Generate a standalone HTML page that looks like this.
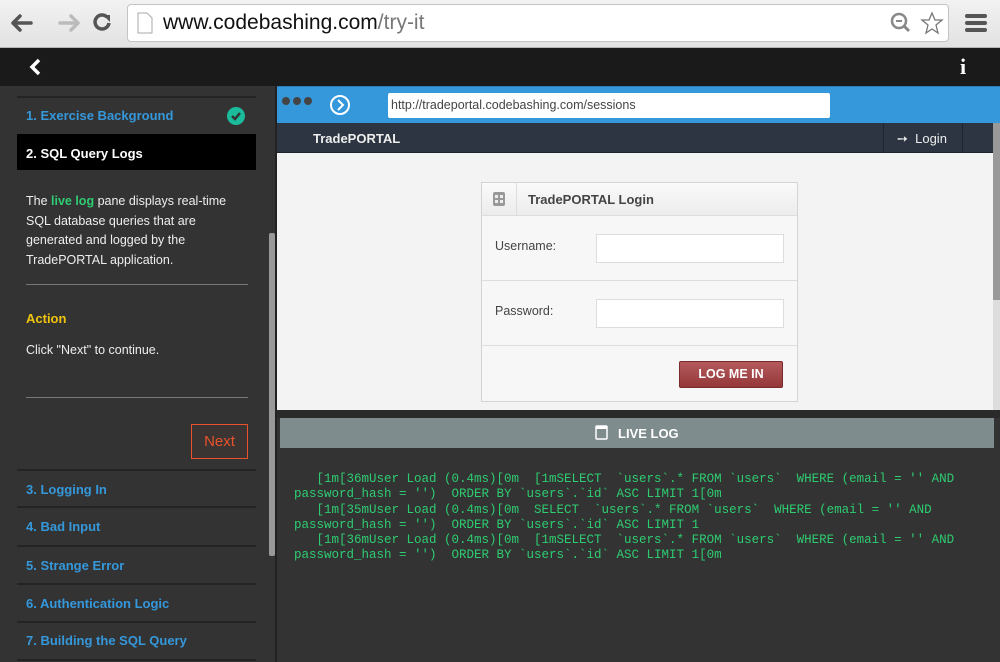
<!DOCTYPE html>
<html><head><meta charset="utf-8"><style>
*{margin:0;padding:0;box-sizing:border-box}
body{width:1000px;height:662px;overflow:hidden;font-family:"Liberation Sans",Arial,sans-serif;background:#333;position:relative}
.a{position:absolute}
.chrome{left:0;top:0;width:1000px;height:48px;background:linear-gradient(#f2f2f2,#e2e2e2);border-bottom:1px solid #b5b5b5}
.url{left:127px;top:4px;width:822px;height:38px;background:#fff;border:1px solid #c4c4c4;border-radius:4px}
.side{left:0;top:86px;width:276px;height:576px;background:#333}
.sep{left:17px;width:239px;height:2px;background:#242424}
.item{left:26px;font-size:13px;font-weight:bold;color:#3498db}
.txt{color:#eee;font-size:12.5px;line-height:19.5px}
pre{font-family:"Liberation Mono",monospace;font-size:12.5px;line-height:15.3px;color:#2ecc71}
</style></head><body>
<div class="a chrome"></div>
<svg class="a" style="left:8px;top:10px" width="110" height="26" viewBox="0 0 110 26">
<path d="M5 13h18M5 13l7-7M5 13l7 7" stroke="#555" stroke-width="3.5" fill="none" stroke-linecap="round"/>
<path d="M52 13h18M70 13l-7-7M70 13l-7 7" stroke="#bbb" stroke-width="3.5" fill="none" stroke-linecap="round"/>
<path d="M99 7a7 7 0 1 0 2 6" stroke="#555" stroke-width="3.5" fill="none"/><path d="M95 5l7 0 0 7z" fill="#555"/>
</svg>
<div class="a url"></div>
<svg class="a" style="left:137px;top:12px" width="16" height="22"><path d="M1 1h9l5 5v15H1z" fill="#fff" stroke="#aaa"/></svg>
<div class="a" style="left:163px;top:11px;font-size:21px;color:#111">www.codebashing.com<span style="color:#777">/try-it</span></div>
<svg class="a" style="left:888px;top:10px" width="60" height="28"><circle cx="11" cy="11" r="7" stroke="#888" stroke-width="2.5" fill="none"/><path d="M16 16l5 5" stroke="#888" stroke-width="3"/><path d="M8 11h6" stroke="#888" stroke-width="2"/><path d="M44 3l3 7h7l-6 5 2 8-6-4-6 4 2-8-6-5h7z" fill="#fff" stroke="#777" stroke-width="1.3"/></svg>
<div class="a" style="left:965px;top:14px;width:22px;height:4px;background:#555;border-radius:2px;box-shadow:0 7px 0 #555,0 14px 0 #555"></div>
<div class="a" style="left:0;top:48px;width:1000px;height:38px;background:#1a1a1a"></div>
<svg class="a" style="left:28px;top:58px" width="14" height="18"><path d="M11 2L4 9l7 7" stroke="#fff" stroke-width="3.5" fill="none"/></svg>
<div class="a" style="left:960px;top:54px;font-family:'Liberation Serif',serif;font-weight:bold;font-size:22px;color:#fff">i</div>

<div class="a side"></div>
<div class="a sep" style="top:96px"></div>
<div class="a item" style="top:108px">1. Exercise Background</div>
<div class="a" style="left:227px;top:107px;width:18px;height:18px;border-radius:50%;background:#1abc9c"></div>
<svg class="a" style="left:227px;top:107px" width="18" height="18"><path d="M5 9l3 3 5-6" stroke="#333" stroke-width="2.5" fill="none"/></svg>
<div class="a" style="left:17px;top:134px;width:239px;height:36px;background:#000"></div>
<div class="a item" style="top:146px;color:#fff">2. SQL Query Logs</div>
<div class="a txt" style="left:26px;top:192px;width:205px">The <b style="color:#2ecc71">live log</b> pane displays real-time SQL database queries that are generated and logged by the TradePORTAL application.</div>
<div class="a" style="left:26px;top:284px;width:222px;height:1px;background:#777"></div>
<div class="a" style="left:26px;top:311px;font-size:13px;font-weight:bold;color:#f1c40f">Action</div>
<div class="a txt" style="left:26px;top:341px">Click "Next" to continue.</div>
<div class="a" style="left:26px;top:397px;width:222px;height:1px;background:#777"></div>
<div class="a" style="left:191px;top:424px;width:57px;height:35px;border:1px solid #e9522b;background:#3a3533;color:#e9522b;font-size:15px;text-align:center;line-height:33px">Next</div>
<div class="a sep" style="top:469px"></div>
<div class="a item" style="top:482px">3. Logging In</div>
<div class="a sep" style="top:506px"></div>
<div class="a item" style="top:519px">4. Bad Input</div>
<div class="a sep" style="top:545px"></div>
<div class="a item" style="top:558px">5. Strange Error</div>
<div class="a sep" style="top:583px"></div>
<div class="a item" style="top:596px">6. Authentication Logic</div>
<div class="a sep" style="top:621px"></div>
<div class="a item" style="top:633px">7. Building the SQL Query</div>
<div class="a sep" style="top:659px"></div>
<div class="a" style="left:269px;top:233px;width:6px;height:323px;background:#999;border-radius:2px"></div>
<div class="a" style="left:275px;top:86px;width:2px;height:576px;background:#222"></div>

<div class="a" style="left:277px;top:86px;width:723px;height:37px;background:#3498db;border-top:1px solid #2a7fb8"></div>
<div class="a" style="left:282px;top:97px;width:8px;height:8px;border-radius:50%;background:#444;box-shadow:11px 0 0 #444,22px 0 0 #444"></div>
<svg class="a" style="left:329px;top:94px" width="22" height="22"><circle cx="11" cy="11" r="9" stroke="#fff" stroke-width="2" fill="none"/><path d="M9 6l5 5-5 5" stroke="#fff" stroke-width="2" fill="none"/></svg>
<div class="a" style="left:388px;top:93px;width:442px;height:25px;background:#fff;border-radius:2px;font-size:12.5px;color:#444;padding:5px 3px">http://tradeportal.codebashing.com/sessions</div>
<div class="a" style="left:277px;top:123px;width:716px;height:30px;background:#2c3541;border-bottom:1px solid #1e252e"></div>
<div class="a" style="left:313px;top:131px;font-size:13px;font-weight:bold;color:#eee">TradePORTAL</div>
<div class="a" style="left:883px;top:123px;width:80px;height:30px;border-left:1px solid #1e252e;border-right:1px solid #1e252e"></div>
<div class="a" style="left:897px;top:131px;font-size:13px;color:#eee">&#10137;&nbsp; Login</div>
<div class="a" style="left:277px;top:153px;width:716px;height:257px;background:#f3f3f3"></div>
<div class="a" style="left:993px;top:123px;width:7px;height:287px;background:#ddd"></div>
<div class="a" style="left:993px;top:123px;width:7px;height:177px;background:#999"></div>

<div class="a" style="left:481px;top:182px;width:317px;height:220px;background:#f7f7f7;border:1px solid #d4d4d4"></div>
<div class="a" style="left:482px;top:183px;width:315px;height:33px;background:linear-gradient(#fafafa,#ececec);border-bottom:1px solid #ddd"></div>
<div class="a" style="left:516px;top:183px;width:1px;height:33px;background:#ddd"></div>
<svg class="a" style="left:492px;top:191px" width="14" height="16"><rect x="1" y="1" width="12" height="14" rx="2" fill="#999"/><rect x="3" y="4" width="3" height="3" fill="#eee"/><rect x="8" y="4" width="3" height="3" fill="#eee"/><rect x="3" y="9" width="3" height="3" fill="#eee"/><rect x="8" y="9" width="3" height="3" fill="#eee"/></svg>
<div class="a" style="left:528px;top:192px;font-size:13px;font-weight:bold;color:#444">TradePORTAL Login</div>
<div class="a" style="left:495px;top:239px;font-size:12.5px;color:#444">Username:</div>
<div class="a" style="left:596px;top:234px;width:188px;height:29px;background:#fff;border:1px solid #ddd"></div>
<div class="a" style="left:482px;top:280px;width:315px;height:1px;background:#ddd"></div>
<div class="a" style="left:495px;top:304px;font-size:12.5px;color:#444">Password:</div>
<div class="a" style="left:596px;top:299px;width:188px;height:29px;background:#fff;border:1px solid #ddd"></div>
<div class="a" style="left:482px;top:345px;width:315px;height:1px;background:#ddd"></div>
<div class="a" style="left:679px;top:361px;width:104px;height:27px;background:linear-gradient(#b55a5c,#94383a);border:1px solid #7a2a2c;border-radius:2px;color:#fff;font-size:12.5px;font-weight:bold;text-align:center;line-height:25px">LOG ME IN</div>

<div class="a" style="left:277px;top:410px;width:723px;height:8px;background:#2a2a2a"></div>
<div class="a" style="left:280px;top:418px;width:714px;height:30px;background:#7f8c8d"></div>
<svg class="a" style="left:595px;top:425px" width="14" height="16"><rect x="1" y="1" width="11" height="13" rx="1" fill="none" stroke="#fff" stroke-width="1.5"/><rect x="1" y="1" width="11" height="3" fill="#fff"/></svg>
<div class="a" style="left:618px;top:426px;font-size:13px;font-weight:bold;color:#fff">LIVE LOG</div>
<div class="a" style="left:277px;top:448px;width:723px;height:214px;background:#333"></div>
<pre class="a" style="left:294px;top:472px">   [1m[36mUser Load (0.4ms)[0m  [1mSELECT  `users`.* FROM `users`  WHERE (email = '' AND
password_hash = '')  ORDER BY `users`.`id` ASC LIMIT 1[0m
   [1m[35mUser Load (0.4ms)[0m  SELECT  `users`.* FROM `users`  WHERE (email = '' AND
password_hash = '')  ORDER BY `users`.`id` ASC LIMIT 1
   [1m[36mUser Load (0.4ms)[0m  [1mSELECT  `users`.* FROM `users`  WHERE (email = '' AND
password_hash = '')  ORDER BY `users`.`id` ASC LIMIT 1[0m</pre>
</body></html>
